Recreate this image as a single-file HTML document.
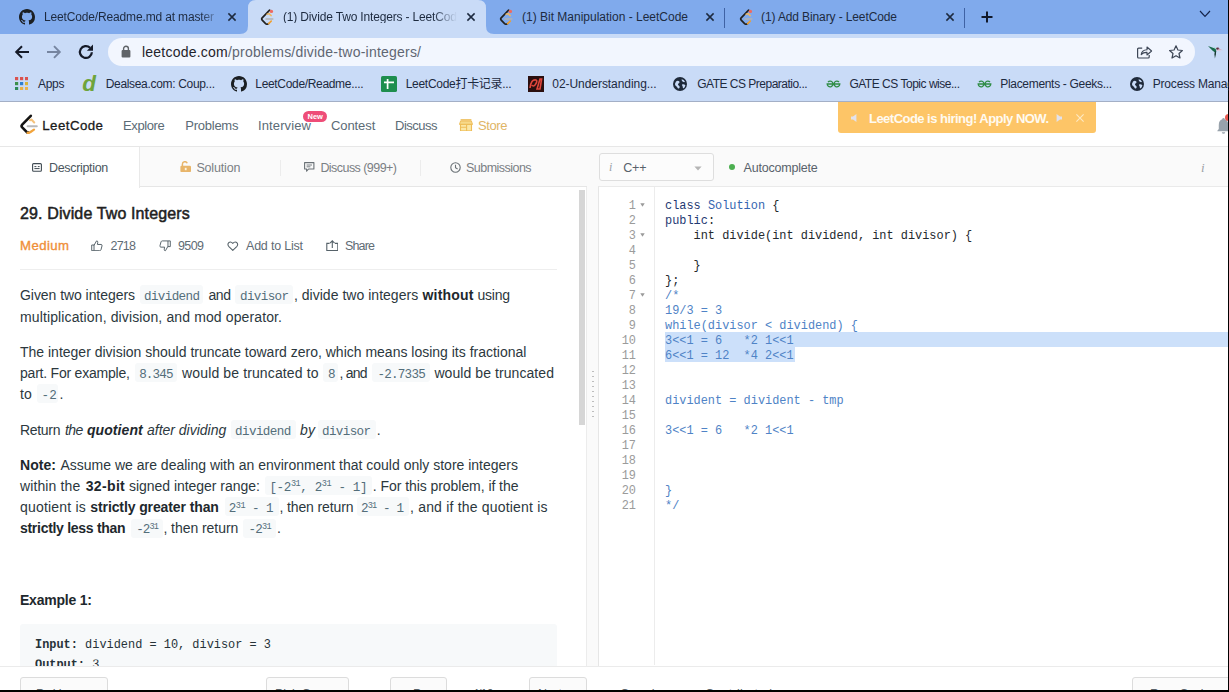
<!DOCTYPE html>
<html><head><meta charset="utf-8"><title>Divide Two Integers - LeetCode</title>
<style>
*{box-sizing:border-box;margin:0;padding:0}
html,body{width:1229px;height:692px;overflow:hidden;background:#fff}
body{font-family:"Liberation Sans","Noto Sans CJK SC",sans-serif;position:relative}
.a{position:absolute}
.t{position:absolute;white-space:pre;line-height:1}
sup{font-size:.68em;vertical-align:baseline;position:relative;top:-.5em;line-height:0}
</style></head><body>

<div class="a" style="left:0;top:0;width:1229px;height:33.5px;background:#80aaec"></div>
<div class="a" style="left:0;top:33.5px;width:1229px;height:69px;background:#c9dbf7"></div>
<div class="a" style="left:0;top:101.4px;width:1229px;height:1.2px;background:#a3afc6"></div>
<svg class="a" style="left:240px;top:0" width="256" height="34" viewBox="0 0 256 34"><path fill="#c9dbf7" d="M0 34 Q8 34 8 26 V8 Q8 0 16 0 H238 Q246 0 246 8 V26 Q246 34 254 34 Z"/></svg>
<div class="a" style="left:108px;top:38px;width:1087px;height:28px;border-radius:14px;background:#f2f6fe"></div>
<div class="a" style="left:724.3px;top:7.5px;width:1px;height:20px;background:#3f62a4"></div>
<div class="a" style="left:964.2px;top:7.5px;width:1px;height:20px;background:#3f62a4"></div>
<svg class="a" style="left:19px;top:9px;" width="16" height="16" viewBox="0 0 16 16"><path fill="#1b1f23" d="M8 0C3.58 0 0 3.58 0 8c0 3.54 2.29 6.53 5.47 7.59.4.07.55-.17.55-.38 0-.19-.01-.82-.01-1.49-2.01.37-2.53-.49-2.69-.94-.09-.23-.48-.94-.82-1.13-.28-.15-.68-.52-.01-.53.63-.01 1.08.58 1.23.82.72 1.21 1.87.87 2.33.66.07-.52.28-.87.51-1.07-1.78-.2-3.64-.89-3.64-3.95 0-.87.31-1.59.82-2.15-.08-.2-.36-1.02.08-2.12 0 0 .67-.21 2.2.82.64-.18 1.32-.27 2-.27.68 0 1.36.09 2 .27 1.53-1.04 2.2-.82 2.2-.82.44 1.1.16 1.92.08 2.12.51.56.82 1.27.82 2.15 0 3.07-1.87 3.75-3.65 3.95.29.25.54.73.54 1.48 0 1.07-.01 1.93-.01 2.2 0 .21.15.46.55.38A8.013 8.013 0 0016 8c0-4.42-3.58-8-8-8z"/></svg>
<svg class="a" style="left:226.5px;top:12px;" width="10" height="10" viewBox="0 0 10 10"><path d="M1.4 1.4 L8.6 8.6 M8.6 1.4 L1.4 8.6" stroke="#1d2a3f" stroke-width="1.5" fill="none"/></svg>
<svg class="a" style="left:260px;top:9px;" width="14" height="16" viewBox="0 0 14 16"><path d="M9.6 1.2 L2.2 8.8 Q1.2 10 2.2 11.2 L5.6 14.6 Q7 15.8 8.6 14.6" fill="none" stroke="#222" stroke-width="1.7" stroke-linecap="round" stroke-linejoin="round"/><path d="M8.6 14.6 L11.2 12.2" fill="none" stroke="#f0a030" stroke-width="1.7" stroke-linecap="round"/><path d="M7.2 5.2 L9 4.6 L11.2 6.6" fill="none" stroke="#f0b860" stroke-width="1.5" stroke-linecap="round" stroke-linejoin="round"/><path d="M6 9.9 H12.8" stroke="#b3b3b3" stroke-width="1.5" stroke-linecap="round"/><circle cx="11.4" cy="2.4" r="1.7" fill="#ee6a62"/></svg>
<svg class="a" style="left:466px;top:12px;" width="10" height="10" viewBox="0 0 10 10"><path d="M1.4 1.4 L8.6 8.6 M8.6 1.4 L1.4 8.6" stroke="#1d2a3f" stroke-width="1.5" fill="none"/></svg>
<svg class="a" style="left:499px;top:9px;" width="14" height="16" viewBox="0 0 14 16"><path d="M9.6 1.2 L2.2 8.8 Q1.2 10 2.2 11.2 L5.6 14.6 Q7 15.8 8.6 14.6" fill="none" stroke="#222" stroke-width="1.7" stroke-linecap="round" stroke-linejoin="round"/><path d="M8.6 14.6 L11.2 12.2" fill="none" stroke="#f0a030" stroke-width="1.7" stroke-linecap="round"/><path d="M7.2 5.2 L9 4.6 L11.2 6.6" fill="none" stroke="#f0b860" stroke-width="1.5" stroke-linecap="round" stroke-linejoin="round"/><path d="M6 9.9 H12.8" stroke="#b3b3b3" stroke-width="1.5" stroke-linecap="round"/><circle cx="11.4" cy="2.4" r="1.7" fill="#ee6a62"/></svg>
<svg class="a" style="left:705px;top:12px;" width="10" height="10" viewBox="0 0 10 10"><path d="M1.4 1.4 L8.6 8.6 M8.6 1.4 L1.4 8.6" stroke="#1d2a3f" stroke-width="1.5" fill="none"/></svg>
<svg class="a" style="left:739px;top:9px;" width="14" height="16" viewBox="0 0 14 16"><path d="M9.6 1.2 L2.2 8.8 Q1.2 10 2.2 11.2 L5.6 14.6 Q7 15.8 8.6 14.6" fill="none" stroke="#222" stroke-width="1.7" stroke-linecap="round" stroke-linejoin="round"/><path d="M8.6 14.6 L11.2 12.2" fill="none" stroke="#f0a030" stroke-width="1.7" stroke-linecap="round"/><path d="M7.2 5.2 L9 4.6 L11.2 6.6" fill="none" stroke="#f0b860" stroke-width="1.5" stroke-linecap="round" stroke-linejoin="round"/><path d="M6 9.9 H12.8" stroke="#b3b3b3" stroke-width="1.5" stroke-linecap="round"/><circle cx="11.4" cy="2.4" r="1.7" fill="#ee6a62"/></svg>
<svg class="a" style="left:944.5px;top:12px;" width="10" height="10" viewBox="0 0 10 10"><path d="M1.4 1.4 L8.6 8.6 M8.6 1.4 L1.4 8.6" stroke="#1d2a3f" stroke-width="1.5" fill="none"/></svg>
<svg class="a" style="left:980px;top:10px;" width="14" height="14" viewBox="0 0 14 14"><path d="M7 1.5 V12.5 M1.5 7 H12.5" stroke="#10182a" stroke-width="2" fill="none"/></svg>
<svg class="a" style="left:1198px;top:9px;" width="14" height="10" viewBox="0 0 14 10"><path d="M2 2 L7 7.4 L12 2" stroke="#15244a" stroke-width="1.15" fill="none"/></svg>
<svg class="a" style="left:14px;top:44px;" width="17" height="16" viewBox="0 0 17 16"><path d="M15 8 H2.5 M8 2.2 L2.2 8 L8 13.8" stroke="#151a28" stroke-width="2" fill="none"/></svg>
<svg class="a" style="left:45.3px;top:44px;" width="17" height="16" viewBox="0 0 17 16"><path d="M2 8 H14.5 M9 2.2 L14.8 8 L9 13.8" stroke="#7685a0" stroke-width="1.9" fill="none"/></svg>
<svg class="a" style="left:77.4px;top:43px;" width="18" height="18" viewBox="0 0 16 16"><path d="M13.2 8.2 A5.3 5.3 0 1 1 11.6 4.2" stroke="#151a28" stroke-width="2" fill="none"/><path d="M14.2 1.4 V6.8 H8.8 Z" fill="#151a28"/></svg>
<svg class="a" style="left:121px;top:45px;" width="10" height="13" viewBox="0 0 10 13"><rect x="0.6" y="5" width="8.8" height="7.4" rx="1" fill="#5f6368"/><path d="M2.6 5.2 V3.6 A2.4 2.4 0 0 1 7.4 3.6 V5.2" stroke="#5f6368" stroke-width="1.4" fill="none"/></svg>
<svg class="a" style="left:1136px;top:44px;" width="17" height="16" viewBox="0 0 17 16"><path d="M6.2 4.2 H2.6 Q1.6 4.2 1.6 5.2 V13 Q1.6 14 2.6 14 H12.2 Q13.2 14 13.2 13 V11" stroke="#3d4656" stroke-width="1.2" fill="none"/><path d="M5.2 10.6 Q5.8 6 11 5.8 V3 L15.6 7 L11 11 V8.4 Q7.4 8.2 5.2 10.6 Z" stroke="#3d4656" stroke-width="1.1" fill="none" stroke-linejoin="round"/></svg>
<svg class="a" style="left:1168px;top:43.5px;" width="16" height="16" viewBox="0 0 16 16"><path d="M8 1.8 L9.9 6 L14.4 6.5 L11 9.5 L12 14 L8 11.7 L4 14 L5 9.5 L1.6 6.5 L6.1 6 Z" stroke="#3d4656" stroke-width="1.2" fill="none" stroke-linejoin="round"/></svg>
<svg class="a" style="left:1207px;top:44px;" width="17" height="15" viewBox="0 0 17 15"><path d="M1 2 L8 4.6 Q9.6 5.4 9.2 7.4 L8 8.4 L5.4 6.6 Z" fill="#1a6b4c"/><path d="M6.6 2.6 L9 4.2 L8.6 5.4 Z" fill="#9be0c6"/><path d="M9.2 7 L8.9 10.4 L7.9 14.4 L7.4 10 L7.9 7.6 Z" fill="#173a30"/><ellipse cx="10.7" cy="4.7" rx="1.6" ry="1.1" fill="#5c2b3a"/><path d="M11.4 4.4 L15.8 6.2 L11.2 5.8 Z" fill="#dca3b4"/><path d="M9.6 6.4 Q12 6.2 13.6 7" stroke="#e8c3cf" stroke-width="0.8" fill="none"/></svg>
<svg class="a" style="left:15px;top:77px;" width="13.2" height="13.2" viewBox="0 0 13.2 13.2"><rect x="0" y="0" width="3.2" height="3.2" fill="#d9534f"/><rect x="5" y="0" width="3.2" height="3.2" fill="#d9534f"/><rect x="10" y="0" width="3.2" height="3.2" fill="#d9534f"/><rect x="0" y="5" width="3.2" height="3.2" fill="#3c8f4a"/><rect x="5" y="5" width="3.2" height="3.2" fill="#2f7fd0"/><rect x="10" y="5" width="3.2" height="3.2" fill="#d8b23a"/><rect x="0" y="10" width="3.2" height="3.2" fill="#2f8a5a"/><rect x="5" y="10" width="3.2" height="3.2" fill="#e7b04a"/><rect x="10" y="10" width="3.2" height="3.2" fill="#e9b24c"/></svg>
<svg class="a" style="left:231px;top:76px;" width="16" height="16" viewBox="0 0 16 16"><path fill="#1b1f23" d="M8 0C3.58 0 0 3.58 0 8c0 3.54 2.29 6.53 5.47 7.59.4.07.55-.17.55-.38 0-.19-.01-.82-.01-1.49-2.01.37-2.53-.49-2.69-.94-.09-.23-.48-.94-.82-1.13-.28-.15-.68-.52-.01-.53.63-.01 1.08.58 1.23.82.72 1.21 1.87.87 2.33.66.07-.52.28-.87.51-1.07-1.78-.2-3.64-.89-3.64-3.95 0-.87.31-1.59.82-2.15-.08-.2-.36-1.02.08-2.12 0 0 .67-.21 2.2.82.64-.18 1.32-.27 2-.27.68 0 1.36.09 2 .27 1.53-1.04 2.2-.82 2.2-.82.44 1.1.16 1.92.08 2.12.51.56.82 1.27.82 2.15 0 3.07-1.87 3.75-3.65 3.95.29.25.54.73.54 1.48 0 1.07-.01 1.93-.01 2.2 0 .21.15.46.55.38A8.013 8.013 0 0016 8c0-4.42-3.58-8-8-8z"/></svg>
<svg class="a" style="left:380.7px;top:76px;" width="16" height="16" viewBox="0 0 16 16"><rect width="16" height="16" rx="1.6" fill="#1e8e4e"/><path d="M3 6.4 H13 M6.6 3 V13" stroke="#fff" stroke-width="1.7"/></svg>
<svg class="a" style="left:528px;top:76px;" width="16" height="16" viewBox="0 0 16 16"><rect width="16" height="16" fill="#2a0f0f"/><path d="M2 12 Q3 3 8 4 Q10 5 7 9 Q5 11 4 9 M9 13 L12 3 L13.6 3 L12 13 Z" stroke="#e0463c" stroke-width="1.6" fill="none"/></svg>
<svg class="a" style="left:673.3px;top:77px;" width="14" height="14" viewBox="0 0 14 14"><circle cx="7" cy="7" r="7" fill="#1f2a3a"/><path d="M3 4.4 Q5 3 6.4 4.6 Q7 6 5.4 6.6 Q4.4 7.6 5.6 8.6 Q7 9 6.6 10.8 Q6 12 5 11.4 Q4 9.4 2.4 8.4 Q1.6 6.4 3 4.4 Z M8.6 2.2 Q11 2.6 12 4.8 Q11 5.6 10 4.8 Q8.6 4.4 8.6 2.2 Z M9 7.4 Q11 6.8 12.4 8.2 Q12 10.4 10.4 11.4 Q9.4 10.4 9.6 9 Q8.6 8.2 9 7.4 Z" fill="#c9dbf7"/></svg>
<svg class="a" style="left:825.7px;top:80px;" width="15" height="8" viewBox="0 0 15 8"><path d="M7 4 H1.2 A2.9 2.9 0 1 0 2 2 M8 4 H13.8 A2.9 2.9 0 1 1 13 2" stroke="#2f8d46" stroke-width="1.3" fill="none"/></svg>
<svg class="a" style="left:977px;top:80px;" width="15" height="8" viewBox="0 0 15 8"><path d="M7 4 H1.2 A2.9 2.9 0 1 0 2 2 M8 4 H13.8 A2.9 2.9 0 1 1 13 2" stroke="#2f8d46" stroke-width="1.3" fill="none"/></svg>
<svg class="a" style="left:1129.7px;top:77px;" width="14" height="14" viewBox="0 0 14 14"><circle cx="7" cy="7" r="7" fill="#1f2a3a"/><path d="M3 4.4 Q5 3 6.4 4.6 Q7 6 5.4 6.6 Q4.4 7.6 5.6 8.6 Q7 9 6.6 10.8 Q6 12 5 11.4 Q4 9.4 2.4 8.4 Q1.6 6.4 3 4.4 Z M8.6 2.2 Q11 2.6 12 4.8 Q11 5.6 10 4.8 Q8.6 4.4 8.6 2.2 Z M9 7.4 Q11 6.8 12.4 8.2 Q12 10.4 10.4 11.4 Q9.4 10.4 9.6 9 Q8.6 8.2 9 7.4 Z" fill="#c9dbf7"/></svg>
<div class="a" style="left:0;top:102px;width:1229px;height:44px;background:#fff"></div>
<div class="a" style="left:0;top:146px;width:1229px;height:1px;background:#e7e7e7"></div>
<svg class="a" style="left:19px;top:112.7px;" width="20" height="24" viewBox="0 0 20 24"><path d="M11.8 2.8 L3.2 11.6 Q1.9 13 3.2 14.4 L7.6 18.9 Q8.4 19.8 9.4 19.6" fill="none" stroke="#141414" stroke-width="2.6" stroke-linecap="round" stroke-linejoin="round"/><path d="M8.6 19.8 Q10 20.2 11.2 19.2 L15 16.6" fill="none" stroke="#f2a43c" stroke-width="2.3" stroke-linecap="round"/><path d="M11 7.2 L12.4 6.6 L15.2 9.4" fill="none" stroke="#f4c27c" stroke-width="2.1" stroke-linecap="round" stroke-linejoin="round"/><path d="M8.6 13.2 H17.8" stroke="#b9b9b9" stroke-width="2" stroke-linecap="round"/></svg>
<div class="a" style="left:303px;top:110.5px;width:24px;height:11px;border-radius:6px;background:#ee4d78"></div>
<svg class="a" style="left:459px;top:118.5px;" width="14" height="12.6" viewBox="0 0 14 12.6"><path d="M1.6 0.9 H12.4" stroke="#eebd58" stroke-width="1.5"/><path d="M1.6 2 L0.5 5.4 H13.5 L12.4 2 Z" fill="#f7d98a" stroke="#eebd58" stroke-width="1"/><rect x="1.5" y="5.4" width="11" height="6.5" fill="#fbe7a6" stroke="#eebd58" stroke-width="1.1"/><path d="M7.6 5.4 V11.9 M1.5 8.3 H7.6" stroke="#eebd58" stroke-width="1.1"/></svg>
<div class="a" style="left:837.5px;top:102px;width:258.5px;height:30.5px;border-radius:0 0 3px 3px;background:#fdc567"></div>
<svg class="a" style="left:849px;top:113px;" width="10" height="10" viewBox="0 0 10 10"><path d="M2 3.4 H4 L7.4 1 V9 L4 6.6 H2 Z" fill="#e2e2ec"/></svg>
<svg class="a" style="left:1054px;top:113px;" width="10" height="10" viewBox="0 0 10 10"><path d="M8 3.4 H6 L2.6 1 V9 L6 6.6 H8 Z" fill="#e2e2ec"/></svg>
<svg class="a" style="left:1074.5px;top:113px;" width="10" height="10" viewBox="0 0 10 10"><path d="M1.4 1.4 L8.6 8.6 M8.6 1.4 L1.4 8.6" stroke="#fde9c4" stroke-width="1.1" fill="none"/></svg>
<svg class="a" style="left:1216.5px;top:116.5px;" width="13" height="17.5" viewBox="0 0 14 20"><path d="M7 1 Q8.4 1 8.4 2.6 Q12.4 3.8 12.4 9 V13.6 L14 15.6 V16.4 H0 V15.6 L1.6 13.6 V9 Q1.6 3.8 5.6 2.6 Q5.6 1 7 1 Z" fill="#98a2ab"/><path d="M5 17.4 H9 Q8.6 19.2 7 19.2 Q5.4 19.2 5 17.4 Z" fill="#98a2ab"/></svg>
<div class="a" style="left:1224.5px;top:113.5px;width:7px;height:7px;border-radius:4px;background:#e9574f"></div>
<div class="a" style="left:0;top:147px;width:1229px;height:541px;background:#fafafa"></div>
<div class="a" style="left:0;top:187px;width:587px;height:479px;background:#fff;border-right:1px solid #ececec"></div>
<div class="a" style="left:0;top:147px;width:140px;height:41px;background:#fff;border-right:1px solid #e9e9e9"></div>
<div class="a" style="left:140px;top:186px;width:447px;height:1px;background:#e6e6e6"></div>
<div class="a" style="left:280px;top:160px;width:1px;height:16px;background:#ececec"></div>
<div class="a" style="left:420px;top:160px;width:1px;height:16px;background:#ececec"></div>
<svg class="a" style="left:32px;top:163px;" width="10" height="9" viewBox="0 0 10 9"><rect x="0.6" y="0.6" width="8.8" height="7.6" rx="1" fill="none" stroke="#3f4a52" stroke-width="1.1"/><path d="M2.4 3.6 H4.4 M2.4 5.6 H7.6 M5.8 3.6 H7.6" stroke="#3f4a52" stroke-width="1"/></svg>
<svg class="a" style="left:180px;top:160.5px;" width="11.5" height="11.5" viewBox="0 0 11.5 11.5"><path d="M2.4 5 V3.2 A2.5 2.5 0 0 1 7.2 2.2" stroke="#e8b56a" stroke-width="1.5" fill="none"/><rect x="0.4" y="4.8" width="10.6" height="6.4" rx="1.2" fill="#e8b56a"/><rect x="4.8" y="6.8" width="1.8" height="2.4" fill="#fdf3e0"/></svg>
<svg class="a" style="left:304px;top:162px;" width="10.5" height="10" viewBox="0 0 10.5 10"><path d="M0.6 0.6 H9.9 V7 H4.6 L2.6 9.2 V7 H0.6 Z" fill="none" stroke="#6a7176" stroke-width="1.1" stroke-linejoin="round"/><path d="M2.6 3 H8 M2.6 4.8 H6.4" stroke="#6a7176" stroke-width="0.9"/></svg>
<svg class="a" style="left:450px;top:162px;" width="11" height="11" viewBox="0 0 11 11"><circle cx="5.5" cy="5.5" r="4.7" fill="none" stroke="#6a7176" stroke-width="1.1"/><path d="M5.5 2.8 V5.7 L7.6 6.9" stroke="#6a7176" stroke-width="1.1" fill="none"/></svg>
<div class="a" style="left:578.5px;top:190px;width:6.5px;height:235px;background:#d6d6d6"></div>
<div class="a" style="left:592px;top:371px;width:1.5px;height:46px;background:repeating-linear-gradient(180deg,#bdbdbd 0 1.5px,transparent 1.5px 5px)"></div>
<svg class="a" style="left:91.2px;top:239.5px;" width="12" height="11.6" viewBox="0 0 13.5 13"><path d="M0.8 5.6 H3.4 V12 H0.8 Z M3.4 6 L6.2 1 Q7.8 0.8 7.6 2.6 L7.2 5 H11.4 Q12.8 5.2 12.4 6.6 L11.2 11 Q10.8 12 9.8 12 H3.4" fill="none" stroke="#566269" stroke-width="1.1" stroke-linejoin="round"/></svg>
<svg class="a" style="left:158.5px;top:240.3px;" width="12" height="11.6" viewBox="0 0 13.5 13"><path d="M12.7 7.4 H10.1 V1 H12.7 Z M10.1 7 L7.3 12 Q5.7 12.2 5.9 10.4 L6.3 8 H2.1 Q0.7 7.8 1.1 6.4 L2.3 2 Q2.7 1 3.7 1 H10.1" fill="none" stroke="#566269" stroke-width="1.1" stroke-linejoin="round"/></svg>
<svg class="a" style="left:227.3px;top:240.6px;" width="11.6" height="10.4" viewBox="0 0 12 11"><path d="M6 10 L1.6 5.6 Q0 3.4 1.8 1.6 Q4 0.2 6 2.6 Q8 0.2 10.2 1.6 Q12 3.4 10.4 5.6 Z" fill="none" stroke="#566269" stroke-width="1.1" stroke-linejoin="round"/></svg>
<svg class="a" style="left:325.8px;top:239.6px;" width="12.6" height="11.4" viewBox="0 0 12.6 11.4"><path d="M3.6 3.4 H0.8 V10.6 H11.8 V3.4 H9" fill="none" stroke="#566269" stroke-width="1.1"/><path d="M6.3 8 V1.2 M4 3.2 L6.3 0.9 L8.6 3.2" fill="none" stroke="#566269" stroke-width="1.1"/></svg>
<div class="a" style="left:20px;top:269px;width:537px;height:1px;background:#eeeeee"></div>
<div class="a" style="left:139.5px;top:285.0px;width:63.5px;height:19px;background:#f7f9fa;border-radius:3px"></div>
<div class="a" style="left:235px;top:285.0px;width:58.0px;height:19px;background:#f7f9fa;border-radius:3px"></div>
<div class="a" style="left:135px;top:363.2px;width:42.3px;height:19px;background:#f7f9fa;border-radius:3px"></div>
<div class="a" style="left:322.9px;top:363.2px;width:15.6px;height:19px;background:#f7f9fa;border-radius:3px"></div>
<div class="a" style="left:372.3px;top:363.2px;width:57.7px;height:19px;background:#f7f9fa;border-radius:3px"></div>
<div class="a" style="left:37.3px;top:384.2px;width:21.2px;height:19px;background:#f7f9fa;border-radius:3px"></div>
<div class="a" style="left:230.8px;top:420.0px;width:64.8px;height:19px;background:#f7f9fa;border-radius:3px"></div>
<div class="a" style="left:317.6px;top:420.0px;width:58.4px;height:19px;background:#f7f9fa;border-radius:3px"></div>
<div class="a" style="left:264.8px;top:476.0px;width:107.2px;height:19px;background:#f7f9fa;border-radius:3px"></div>
<div class="a" style="left:224.5px;top:497.4px;width:54.0px;height:19px;background:#f7f9fa;border-radius:3px"></div>
<div class="a" style="left:356.5px;top:497.4px;width:52.5px;height:19px;background:#f7f9fa;border-radius:3px"></div>
<div class="a" style="left:130.6px;top:518.6px;width:32.1px;height:19px;background:#f7f9fa;border-radius:3px"></div>
<div class="a" style="left:243.4px;top:518.6px;width:32.3px;height:19px;background:#f7f9fa;border-radius:3px"></div>
<div class="a" style="left:20px;top:624px;width:537px;height:42px;background:#f7f9fa;border-radius:3px 3px 0 0"></div>
<div class="a" style="left:598.5px;top:153px;width:115px;height:27.5px;background:#fcfcfc;border:1px solid #dedede;border-radius:3px"></div>
<svg class="a" style="left:693.5px;top:165.5px;" width="8" height="5" viewBox="0 0 8 5"><path d="M0.4 0.4 H7.6 L4 4.4 Z" fill="#b5b5b5"/></svg>
<div class="a" style="left:729.4px;top:164px;width:5.6px;height:5.6px;border-radius:3px;background:#4caf50"></div>
<div class="a" style="left:598px;top:186px;width:631px;height:480.5px;background:#fff;border-left:1px solid #e6e6e6;border-top:1px solid #eaeaea;border-bottom:1px solid #eaeaea"></div>
<div class="a" style="left:654px;top:187px;width:1px;height:478px;background:#ececec"></div>
<div class="a" style="left:665px;top:331.7px;width:564px;height:15px;background:#cce0fa"></div>
<div class="a" style="left:665px;top:346.7px;width:129.5px;height:15px;background:#cce0fa"></div>
<svg class="a" style="left:640px;top:203px;" width="5" height="4" viewBox="0 0 5 4"><path d="M0.3 0.3 H4.7 L2.5 3.7 Z" fill="#9a9a9a"/></svg>
<svg class="a" style="left:640px;top:233px;" width="5" height="4" viewBox="0 0 5 4"><path d="M0.3 0.3 H4.7 L2.5 3.7 Z" fill="#9a9a9a"/></svg>
<svg class="a" style="left:640px;top:293px;" width="5" height="4" viewBox="0 0 5 4"><path d="M0.3 0.3 H4.7 L2.5 3.7 Z" fill="#9a9a9a"/></svg>
<div class="a" style="left:0;top:666px;width:1229px;height:24px;background:#fff;border-top:1px solid #ebebeb"></div>
<div class="a" style="left:20px;top:677.2px;width:87.5px;height:14px;border:1px solid #dcdcdc;border-radius:3px 3px 0 0;background:#fbfbfb"></div>
<div class="a" style="left:266px;top:677.2px;width:83px;height:14px;border:1px solid #dcdcdc;border-radius:3px 3px 0 0;background:#fbfbfb"></div>
<div class="a" style="left:390px;top:677.2px;width:56.5px;height:14px;border:1px solid #dcdcdc;border-radius:3px 3px 0 0;background:#fbfbfb"></div>
<div class="a" style="left:528.5px;top:677.2px;width:58.0px;height:14px;border:1px solid #dcdcdc;border-radius:3px 3px 0 0;background:#fbfbfb"></div>
<div class="a" style="left:1131.5px;top:677.2px;width:108.5px;height:14px;border:1px solid #dcdcdc;border-radius:3px 3px 0 0;background:#fbfbfb"></div>
<div class="a" style="left:0;top:689.8px;width:1229px;height:2.2px;background:#000"></div>
<div class="a" style="left:1227.9px;top:0;width:1.1px;height:692px;background:#000"></div>
<div class="t" id="t0" style='left:44px;top:11.00px;font:400 12px/1 "Liberation Sans","Noto Sans CJK SC",sans-serif;color:#1d2a3f;letter-spacing:-0.152px;-webkit-mask-image:linear-gradient(90deg,#000 92%,rgba(0,0,0,.35) 100%);mask-image:linear-gradient(90deg,#000 92%,rgba(0,0,0,.35) 100%);'>LeetCode/Readme.md at master</div>
<div class="t" id="t1" style='left:283px;top:11.00px;font:400 12px/1 "Liberation Sans","Noto Sans CJK SC",sans-serif;color:#1d2a3f;letter-spacing:-0.163px;-webkit-mask-image:linear-gradient(90deg,#000 86%,transparent 100%);mask-image:linear-gradient(90deg,#000 86%,transparent 100%);'>(1) Divide Two Integers - LeetCod</div>
<div class="t" id="t2" style='left:522px;top:11.00px;font:400 12px/1 "Liberation Sans","Noto Sans CJK SC",sans-serif;color:#1d2a3f;letter-spacing:-0.003px;'>(1) Bit Manipulation - LeetCode</div>
<div class="t" id="t3" style='left:761px;top:11.00px;font:400 12px/1 "Liberation Sans","Noto Sans CJK SC",sans-serif;color:#1d2a3f;letter-spacing:-0.115px;'>(1) Add Binary - LeetCode</div>
<div class="t" id="t4" style='left:142px;top:45.00px;font:400 14px/1 "Liberation Sans","Noto Sans CJK SC",sans-serif;color:#263238;letter-spacing:0.219px;'><span style="color:#1f232b">leetcode.com</span><span style="color:#5f6673">/problems/divide-two-integers/</span></div>
<div class="t" id="t5" style='left:38px;top:78.00px;font:400 12px/1 "Liberation Sans","Noto Sans CJK SC",sans-serif;color:#1d2a3f;letter-spacing:-0.286px;'>Apps</div>
<div class="t" id="t6" style='left:82.3px;top:73.00px;font:italic 700 22.5px/1 "Liberation Sans","Noto Sans CJK SC",sans-serif;color:#6ea43c;letter-spacing:0.000px;'>d</div>
<div class="t" id="t7" style='left:105.7px;top:78.00px;font:400 12px/1 "Liberation Sans","Noto Sans CJK SC",sans-serif;color:#1d2a3f;letter-spacing:-0.321px;'>Dealsea.com: Coup...</div>
<div class="t" id="t8" style='left:255.3px;top:78.00px;font:400 12px/1 "Liberation Sans","Noto Sans CJK SC",sans-serif;color:#1d2a3f;letter-spacing:-0.327px;'>LeetCode/Readme....</div>
<div class="t" id="t9" style='left:405.7px;top:78.00px;font:400 12px/1 "Liberation Sans","Noto Sans CJK SC",sans-serif;color:#1d2a3f;letter-spacing:-0.289px;'>LeetCode打卡记录...</div>
<div class="t" id="t10" style='left:552.3px;top:78.00px;font:400 12px/1 "Liberation Sans","Noto Sans CJK SC",sans-serif;color:#1d2a3f;letter-spacing:-0.056px;'>02-Understanding...</div>
<div class="t" id="t11" style='left:697.3px;top:78.00px;font:400 12px/1 "Liberation Sans","Noto Sans CJK SC",sans-serif;color:#1d2a3f;letter-spacing:-0.510px;'>GATE CS Preparatio...</div>
<div class="t" id="t12" style='left:849.4px;top:78.00px;font:400 12px/1 "Liberation Sans","Noto Sans CJK SC",sans-serif;color:#1d2a3f;letter-spacing:-0.483px;'>GATE CS Topic wise...</div>
<div class="t" id="t13" style='left:1000.3px;top:78.00px;font:400 12px/1 "Liberation Sans","Noto Sans CJK SC",sans-serif;color:#1d2a3f;letter-spacing:-0.317px;'>Placements - Geeks...</div>
<div class="t" id="t14" style='left:1152.7px;top:78.00px;font:400 12px/1 "Liberation Sans","Noto Sans CJK SC",sans-serif;color:#1d2a3f;letter-spacing:-0.173px;'>Process Manag</div>
<div class="t" id="t15" style='left:42.3px;top:119.20px;font:400 13.3px/1 "Liberation Sans","Noto Sans CJK SC",sans-serif;color:#1a1a1a;letter-spacing:0.433px;-webkit-text-stroke:0.3px #1a1a1a;'>LeetCode</div>
<div class="t" id="t16" style='left:123px;top:118.60px;font:400 13px/1 "Liberation Sans","Noto Sans CJK SC",sans-serif;color:#5b6b76;letter-spacing:-0.380px;'>Explore</div>
<div class="t" id="t17" style='left:185.2px;top:118.60px;font:400 13px/1 "Liberation Sans","Noto Sans CJK SC",sans-serif;color:#5b6b76;letter-spacing:-0.232px;'>Problems</div>
<div class="t" id="t18" style='left:258px;top:118.60px;font:400 13px/1 "Liberation Sans","Noto Sans CJK SC",sans-serif;color:#5b6b76;letter-spacing:0.121px;'>Interview</div>
<div class="t" id="t19" style='left:307.5px;top:113.20px;font:700 7.5px/1 "Liberation Sans","Noto Sans CJK SC",sans-serif;color:#fff;letter-spacing:0.000px;'>New</div>
<div class="t" id="t20" style='left:331px;top:118.60px;font:400 13px/1 "Liberation Sans","Noto Sans CJK SC",sans-serif;color:#5b6b76;letter-spacing:-0.085px;'>Contest</div>
<div class="t" id="t21" style='left:395px;top:118.60px;font:400 13px/1 "Liberation Sans","Noto Sans CJK SC",sans-serif;color:#5b6b76;letter-spacing:-0.503px;'>Discuss</div>
<div class="t" id="t22" style='left:478px;top:118.60px;font:400 13px/1 "Liberation Sans","Noto Sans CJK SC",sans-serif;color:#e0b566;letter-spacing:-0.395px;'>Store</div>
<div class="t" id="t23" style='left:869px;top:111.60px;font:700 13px/1 "Liberation Sans","Noto Sans CJK SC",sans-serif;color:#fffaf0;letter-spacing:-0.526px;'>LeetCode is hiring! Apply NOW.</div>
<div class="t" id="t24" style='left:49px;top:161.90px;font:400 12.5px/1 "Liberation Sans","Noto Sans CJK SC",sans-serif;color:#4b565e;letter-spacing:-0.323px;'>Description</div>
<div class="t" id="t25" style='left:196.4px;top:161.90px;font:400 12.5px/1 "Liberation Sans","Noto Sans CJK SC",sans-serif;color:#7a8084;letter-spacing:-0.170px;'>Solution</div>
<div class="t" id="t26" style='left:320.4px;top:161.90px;font:400 12.5px/1 "Liberation Sans","Noto Sans CJK SC",sans-serif;color:#7a8084;letter-spacing:-0.548px;'>Discuss (999+)</div>
<div class="t" id="t27" style='left:466px;top:161.90px;font:400 12.5px/1 "Liberation Sans","Noto Sans CJK SC",sans-serif;color:#7a8084;letter-spacing:-0.527px;'>Submissions</div>
<div class="t" id="t28" style='left:20px;top:205.50px;font:400 16px/1 "Liberation Sans","Noto Sans CJK SC",sans-serif;color:#212121;letter-spacing:0.127px;-webkit-text-stroke:0.5px #212121;'>29. Divide Two Integers</div>
<div class="t" id="t29" style='left:20px;top:238.80px;font:400 13.2px/1 "Liberation Sans","Noto Sans CJK SC",sans-serif;color:#ef8f3a;letter-spacing:0.419px;-webkit-text-stroke:0.35px #ef8f3a;'>Medium</div>
<div class="t" id="t30" style='left:110.5px;top:239.80px;font:400 12.5px/1 "Liberation Sans","Noto Sans CJK SC",sans-serif;color:#5f6c75;letter-spacing:-0.771px;'>2718</div>
<div class="t" id="t31" style='left:178px;top:239.80px;font:400 12.5px/1 "Liberation Sans","Noto Sans CJK SC",sans-serif;color:#5f6c75;letter-spacing:-0.604px;'>9509</div>
<div class="t" id="t32" style='left:246px;top:239.80px;font:400 12.5px/1 "Liberation Sans","Noto Sans CJK SC",sans-serif;color:#5f6c75;letter-spacing:-0.208px;'>Add to List</div>
<div class="t" id="t33" style='left:345px;top:239.80px;font:400 12.5px/1 "Liberation Sans","Noto Sans CJK SC",sans-serif;color:#5f6c75;letter-spacing:-0.840px;'>Share</div>
<div class="t" id="t34" style='left:20px;top:287.70px;font:400 14px/1 "Liberation Sans","Noto Sans CJK SC",sans-serif;color:#2c383e;letter-spacing:-0.056px;'>Given two integers</div>
<div class="t" id="t35" style='left:144px;top:290.70px;font:400 12.6px/1 "Liberation Mono","DejaVu Sans Mono",monospace;color:#546e7a;letter-spacing:-0.638px;'>dividend</div>
<div class="t" id="t36" style='left:208.5px;top:287.70px;font:400 14px/1 "Liberation Sans","Noto Sans CJK SC",sans-serif;color:#2c383e;letter-spacing:-0.430px;'>and</div>
<div class="t" id="t37" style='left:240px;top:290.70px;font:400 12.6px/1 "Liberation Mono","DejaVu Sans Mono",monospace;color:#546e7a;letter-spacing:-0.651px;'>divisor</div>
<div class="t" id="t38" style='left:293.9px;top:287.70px;font:400 14px/1 "Liberation Sans","Noto Sans CJK SC",sans-serif;color:#2c383e;letter-spacing:0.028px;'>, divide two integers</div>
<div class="t" id="t39" style='left:422.5px;top:287.70px;font:700 14px/1 "Liberation Sans","Noto Sans CJK SC",sans-serif;color:#1e282d;letter-spacing:0.189px;'>without</div>
<div class="t" id="t40" style='left:477.5px;top:287.70px;font:400 14px/1 "Liberation Sans","Noto Sans CJK SC",sans-serif;color:#2c383e;letter-spacing:-0.242px;'>using</div>
<div class="t" id="t41" style='left:20px;top:309.60px;font:400 14px/1 "Liberation Sans","Noto Sans CJK SC",sans-serif;color:#2c383e;letter-spacing:0.124px;'>multiplication, division, and mod operator.</div>
<div class="t" id="t42" style='left:20px;top:344.50px;font:400 14px/1 "Liberation Sans","Noto Sans CJK SC",sans-serif;color:#2c383e;letter-spacing:-0.002px;'>The integer division should truncate toward zero, which means losing its fractional</div>
<div class="t" id="t43" style='left:20px;top:365.90px;font:400 14px/1 "Liberation Sans","Noto Sans CJK SC",sans-serif;color:#2c383e;letter-spacing:-0.218px;'>part. For example,</div>
<div class="t" id="t44" style='left:139.2px;top:368.90px;font:400 12.6px/1 "Liberation Mono","DejaVu Sans Mono",monospace;color:#546e7a;letter-spacing:-0.874px;'>8.345</div>
<div class="t" id="t45" style='left:182.1px;top:365.90px;font:400 14px/1 "Liberation Sans","Noto Sans CJK SC",sans-serif;color:#2c383e;letter-spacing:0.126px;'>would be truncated to</div>
<div class="t" id="t46" style='left:328px;top:368.90px;font:400 12.6px/1 "Liberation Mono","DejaVu Sans Mono",monospace;color:#546e7a;letter-spacing:0.000px;'>8</div>
<div class="t" id="t47" style='left:339.5px;top:365.90px;font:400 14px/1 "Liberation Sans","Noto Sans CJK SC",sans-serif;color:#2c383e;letter-spacing:-0.785px;'>, and</div>
<div class="t" id="t48" style='left:377.4px;top:368.90px;font:400 12.6px/1 "Liberation Mono","DejaVu Sans Mono",monospace;color:#546e7a;letter-spacing:-0.751px;'>-2.7335</div>
<div class="t" id="t49" style='left:434.4px;top:365.90px;font:400 14px/1 "Liberation Sans","Noto Sans CJK SC",sans-serif;color:#2c383e;letter-spacing:0.076px;'>would be truncated</div>
<div class="t" id="t50" style='left:20px;top:386.90px;font:400 14px/1 "Liberation Sans","Noto Sans CJK SC",sans-serif;color:#2c383e;letter-spacing:0.000px;'>to</div>
<div class="t" id="t51" style='left:41.6px;top:389.90px;font:400 12.6px/1 "Liberation Mono","DejaVu Sans Mono",monospace;color:#546e7a;letter-spacing:0.000px;'>-2</div>
<div class="t" id="t52" style='left:59.5px;top:386.90px;font:400 14px/1 "Liberation Sans","Noto Sans CJK SC",sans-serif;color:#2c383e;letter-spacing:0.000px;'>.</div>
<div class="t" id="t53" style='left:20px;top:422.70px;font:400 14px/1 "Liberation Sans","Noto Sans CJK SC",sans-serif;color:#2c383e;letter-spacing:-0.306px;'>Return</div>
<div class="t" id="t54" style='left:65px;top:422.70px;font:italic 400 14px/1 "Liberation Sans","Noto Sans CJK SC",sans-serif;color:#2c383e;letter-spacing:-0.634px;'>the</div>
<div class="t" id="t55" style='left:87px;top:422.70px;font:italic 700 14px/1 "Liberation Sans","Noto Sans CJK SC",sans-serif;color:#1e282d;letter-spacing:0.069px;'>quotient</div>
<div class="t" id="t56" style='left:147px;top:422.70px;font:italic 400 14px/1 "Liberation Sans","Noto Sans CJK SC",sans-serif;color:#2c383e;letter-spacing:-0.015px;'>after dividing</div>
<div class="t" id="t57" style='left:235px;top:425.70px;font:400 12.6px/1 "Liberation Mono","DejaVu Sans Mono",monospace;color:#546e7a;letter-spacing:-0.596px;'>dividend</div>
<div class="t" id="t58" style='left:300.1px;top:422.70px;font:italic 400 14px/1 "Liberation Sans","Noto Sans CJK SC",sans-serif;color:#2c383e;letter-spacing:0.000px;'>by</div>
<div class="t" id="t59" style='left:322px;top:425.70px;font:400 12.6px/1 "Liberation Mono","DejaVu Sans Mono",monospace;color:#546e7a;letter-spacing:-0.651px;'>divisor</div>
<div class="t" id="t60" style='left:376.8px;top:422.70px;font:400 14px/1 "Liberation Sans","Noto Sans CJK SC",sans-serif;color:#2c383e;letter-spacing:0.000px;'>.</div>
<div class="t" id="t61" style='left:20px;top:457.70px;font:700 14px/1 "Liberation Sans","Noto Sans CJK SC",sans-serif;color:#1e282d;letter-spacing:0.055px;'>Note:</div>
<div class="t" id="t62" style='left:60.5px;top:457.70px;font:400 14px/1 "Liberation Sans","Noto Sans CJK SC",sans-serif;color:#2c383e;letter-spacing:-0.001px;'>Assume we are dealing with an environment that could only store integers</div>
<div class="t" id="t63" style='left:20px;top:478.70px;font:400 14px/1 "Liberation Sans","Noto Sans CJK SC",sans-serif;color:#2c383e;letter-spacing:0.116px;'>within the</div>
<div class="t" id="t64" style='left:85.7px;top:478.70px;font:700 14px/1 "Liberation Sans","Noto Sans CJK SC",sans-serif;color:#1e282d;letter-spacing:0.351px;'>32-bit</div>
<div class="t" id="t65" style='left:129.1px;top:478.70px;font:400 14px/1 "Liberation Sans","Noto Sans CJK SC",sans-serif;color:#2c383e;letter-spacing:-0.042px;'>signed integer range:</div>
<div class="t" id="t66" style='left:269.4px;top:481.70px;font:400 12.6px/1 "Liberation Mono","DejaVu Sans Mono",monospace;color:#546e7a;letter-spacing:-0.400px;'>[-2<sup>31</sup>, 2<sup>31</sup> - 1]</div>
<div class="t" id="t67" style='left:372.8px;top:478.70px;font:400 14px/1 "Liberation Sans","Noto Sans CJK SC",sans-serif;color:#2c383e;letter-spacing:-0.055px;'>. For this problem, if the</div>
<div class="t" id="t68" style='left:20px;top:500.10px;font:400 14px/1 "Liberation Sans","Noto Sans CJK SC",sans-serif;color:#2c383e;letter-spacing:0.197px;'>quotient is</div>
<div class="t" id="t69" style='left:90.3px;top:500.10px;font:700 14px/1 "Liberation Sans","Noto Sans CJK SC",sans-serif;color:#1e282d;letter-spacing:-0.106px;'>strictly greater than</div>
<div class="t" id="t70" style='left:228.8px;top:503.10px;font:400 12.6px/1 "Liberation Mono","DejaVu Sans Mono",monospace;color:#546e7a;letter-spacing:-0.544px;'>2<sup>31</sup> - 1</div>
<div class="t" id="t71" style='left:279.4px;top:500.10px;font:400 14px/1 "Liberation Sans","Noto Sans CJK SC",sans-serif;color:#2c383e;letter-spacing:-0.117px;'>, then return</div>
<div class="t" id="t72" style='left:361px;top:503.10px;font:400 12.6px/1 "Liberation Mono","DejaVu Sans Mono",monospace;color:#546e7a;letter-spacing:-0.844px;'>2<sup>31</sup> - 1</div>
<div class="t" id="t73" style='left:410px;top:500.10px;font:400 14px/1 "Liberation Sans","Noto Sans CJK SC",sans-serif;color:#2c383e;letter-spacing:0.192px;'>, and if the quotient is</div>
<div class="t" id="t74" style='left:20px;top:521.30px;font:700 14px/1 "Liberation Sans","Noto Sans CJK SC",sans-serif;color:#1e282d;letter-spacing:-0.288px;'>strictly less than</div>
<div class="t" id="t75" style='left:136.2px;top:524.30px;font:400 12.6px/1 "Liberation Mono","DejaVu Sans Mono",monospace;color:#546e7a;letter-spacing:-0.900px;'>-2<sup>31</sup></div>
<div class="t" id="t76" style='left:163.4px;top:521.30px;font:400 14px/1 "Liberation Sans","Noto Sans CJK SC",sans-serif;color:#2c383e;letter-spacing:-0.050px;'>, then return</div>
<div class="t" id="t77" style='left:248.4px;top:524.30px;font:400 12.6px/1 "Liberation Mono","DejaVu Sans Mono",monospace;color:#546e7a;letter-spacing:-0.730px;'>-2<sup>31</sup></div>
<div class="t" id="t78" style='left:277px;top:521.30px;font:400 14px/1 "Liberation Sans","Noto Sans CJK SC",sans-serif;color:#2c383e;letter-spacing:0.000px;'>.</div>
<div class="t" id="t79" style='left:20px;top:592.50px;font:700 14px/1 "Liberation Sans","Noto Sans CJK SC",sans-serif;color:#1e282d;letter-spacing:-0.215px;'>Example 1:</div>
<div class="t" id="t80" style='left:35px;top:640.30px;font:400 11.9px/1 "Liberation Mono","DejaVu Sans Mono",monospace;color:#263238;letter-spacing:0.016px;'><b>Input:</b> dividend = 10, divisor = 3</div>
<div class="t" id="t81" style='left:35px;top:659.50px;font:400 11.9px/1 "Liberation Mono","DejaVu Sans Mono",monospace;color:#263238;letter-spacing:0.008px;clip-path:inset(0 0 5.5px 0);'><b>Output:</b> 3</div>
<div class="t" id="t82" style='left:609px;top:161.00px;font:italic 400 12px/1 "Liberation Sans","Noto Sans CJK SC",sans-serif;color:#9aa0a6;letter-spacing:0.000px;font-family:"Liberation Serif",serif;'>i</div>
<div class="t" id="t83" style='left:623.2px;top:161.90px;font:400 12.5px/1 "Liberation Sans","Noto Sans CJK SC",sans-serif;color:#58626b;letter-spacing:-0.170px;'>C++</div>
<div class="t" id="t84" style='left:743.6px;top:161.90px;font:400 12.5px/1 "Liberation Sans","Noto Sans CJK SC",sans-serif;color:#58626b;letter-spacing:-0.203px;'>Autocomplete</div>
<div class="t" id="t85" style='left:1201px;top:160.50px;font:italic 400 13px/1 "Liberation Sans","Noto Sans CJK SC",sans-serif;color:#9aa0a6;letter-spacing:0.000px;font-family:"Liberation Serif",serif;'>i</div>
<div class="t" id="t86" style='left:628.85px;top:201.00px;font:400 11.9px/1 "Liberation Mono","DejaVu Sans Mono",monospace;color:#9b9b9b;letter-spacing:0.000px;'>1</div>
<div class="t" id="t87" style='left:665px;top:201.00px;font:400 11.92px/1 "Liberation Mono","DejaVu Sans Mono",monospace;color:#24292e;letter-spacing:0.000px;'><span style="color:#1f3a73">class</span> <span style="color:#3566b0">Solution</span> {</div>
<div class="t" id="t88" style='left:628.85px;top:216.00px;font:400 11.9px/1 "Liberation Mono","DejaVu Sans Mono",monospace;color:#9b9b9b;letter-spacing:0.000px;'>2</div>
<div class="t" id="t89" style='left:665px;top:216.00px;font:400 11.92px/1 "Liberation Mono","DejaVu Sans Mono",monospace;color:#24292e;letter-spacing:0.000px;'><span style="color:#1f3a73">public</span>:</div>
<div class="t" id="t90" style='left:628.85px;top:231.00px;font:400 11.9px/1 "Liberation Mono","DejaVu Sans Mono",monospace;color:#9b9b9b;letter-spacing:0.000px;'>3</div>
<div class="t" id="t91" style='left:665px;top:231.00px;font:400 11.92px/1 "Liberation Mono","DejaVu Sans Mono",monospace;color:#24292e;letter-spacing:0.000px;'>    int divide(int dividend, int divisor) {</div>
<div class="t" id="t92" style='left:628.85px;top:246.00px;font:400 11.9px/1 "Liberation Mono","DejaVu Sans Mono",monospace;color:#9b9b9b;letter-spacing:0.000px;'>4</div>
<div class="t" id="t93" style='left:628.85px;top:261.00px;font:400 11.9px/1 "Liberation Mono","DejaVu Sans Mono",monospace;color:#9b9b9b;letter-spacing:0.000px;'>5</div>
<div class="t" id="t94" style='left:665px;top:261.00px;font:400 11.92px/1 "Liberation Mono","DejaVu Sans Mono",monospace;color:#24292e;letter-spacing:0.000px;'>    }</div>
<div class="t" id="t95" style='left:628.85px;top:276.00px;font:400 11.9px/1 "Liberation Mono","DejaVu Sans Mono",monospace;color:#9b9b9b;letter-spacing:0.000px;'>6</div>
<div class="t" id="t96" style='left:665px;top:276.00px;font:400 11.92px/1 "Liberation Mono","DejaVu Sans Mono",monospace;color:#24292e;letter-spacing:0.000px;'>};</div>
<div class="t" id="t97" style='left:628.85px;top:291.00px;font:400 11.9px/1 "Liberation Mono","DejaVu Sans Mono",monospace;color:#9b9b9b;letter-spacing:0.000px;'>7</div>
<div class="t" id="t98" style='left:665px;top:291.00px;font:400 11.92px/1 "Liberation Mono","DejaVu Sans Mono",monospace;color:#24292e;letter-spacing:0.000px;'><span style="color:#4f83c6">/*</span></div>
<div class="t" id="t99" style='left:628.85px;top:306.00px;font:400 11.9px/1 "Liberation Mono","DejaVu Sans Mono",monospace;color:#9b9b9b;letter-spacing:0.000px;'>8</div>
<div class="t" id="t100" style='left:665px;top:306.00px;font:400 11.92px/1 "Liberation Mono","DejaVu Sans Mono",monospace;color:#24292e;letter-spacing:0.000px;'><span style="color:#4f83c6">19/3 = 3</span></div>
<div class="t" id="t101" style='left:628.85px;top:321.00px;font:400 11.9px/1 "Liberation Mono","DejaVu Sans Mono",monospace;color:#9b9b9b;letter-spacing:0.000px;'>9</div>
<div class="t" id="t102" style='left:665px;top:321.00px;font:400 11.92px/1 "Liberation Mono","DejaVu Sans Mono",monospace;color:#24292e;letter-spacing:0.000px;'><span style="color:#4f83c6">while(divisor &lt; dividend) {</span></div>
<div class="t" id="t103" style='left:621.7px;top:336.00px;font:400 11.9px/1 "Liberation Mono","DejaVu Sans Mono",monospace;color:#9b9b9b;letter-spacing:0.000px;'>10</div>
<div class="t" id="t104" style='left:665px;top:336.00px;font:400 11.92px/1 "Liberation Mono","DejaVu Sans Mono",monospace;color:#24292e;letter-spacing:0.000px;'><span style="color:#4f83c6">3&lt;&lt;1 = 6   *2 1&lt;&lt;1</span></div>
<div class="t" id="t105" style='left:621.7px;top:351.00px;font:400 11.9px/1 "Liberation Mono","DejaVu Sans Mono",monospace;color:#9b9b9b;letter-spacing:0.000px;'>11</div>
<div class="t" id="t106" style='left:665px;top:351.00px;font:400 11.92px/1 "Liberation Mono","DejaVu Sans Mono",monospace;color:#24292e;letter-spacing:0.000px;'><span style="color:#4f83c6">6&lt;&lt;1 = 12  *4 2&lt;&lt;1</span></div>
<div class="t" id="t107" style='left:621.7px;top:366.00px;font:400 11.9px/1 "Liberation Mono","DejaVu Sans Mono",monospace;color:#9b9b9b;letter-spacing:0.000px;'>12</div>
<div class="t" id="t108" style='left:621.7px;top:381.00px;font:400 11.9px/1 "Liberation Mono","DejaVu Sans Mono",monospace;color:#9b9b9b;letter-spacing:0.000px;'>13</div>
<div class="t" id="t109" style='left:621.7px;top:396.00px;font:400 11.9px/1 "Liberation Mono","DejaVu Sans Mono",monospace;color:#9b9b9b;letter-spacing:0.000px;'>14</div>
<div class="t" id="t110" style='left:665px;top:396.00px;font:400 11.92px/1 "Liberation Mono","DejaVu Sans Mono",monospace;color:#24292e;letter-spacing:0.000px;'><span style="color:#4f83c6">divident = divident - tmp</span></div>
<div class="t" id="t111" style='left:621.7px;top:411.00px;font:400 11.9px/1 "Liberation Mono","DejaVu Sans Mono",monospace;color:#9b9b9b;letter-spacing:0.000px;'>15</div>
<div class="t" id="t112" style='left:621.7px;top:426.00px;font:400 11.9px/1 "Liberation Mono","DejaVu Sans Mono",monospace;color:#9b9b9b;letter-spacing:0.000px;'>16</div>
<div class="t" id="t113" style='left:665px;top:426.00px;font:400 11.92px/1 "Liberation Mono","DejaVu Sans Mono",monospace;color:#24292e;letter-spacing:0.000px;'><span style="color:#4f83c6">3&lt;&lt;1 = 6   *2 1&lt;&lt;1</span></div>
<div class="t" id="t114" style='left:621.7px;top:441.00px;font:400 11.9px/1 "Liberation Mono","DejaVu Sans Mono",monospace;color:#9b9b9b;letter-spacing:0.000px;'>17</div>
<div class="t" id="t115" style='left:621.7px;top:456.00px;font:400 11.9px/1 "Liberation Mono","DejaVu Sans Mono",monospace;color:#9b9b9b;letter-spacing:0.000px;'>18</div>
<div class="t" id="t116" style='left:621.7px;top:471.00px;font:400 11.9px/1 "Liberation Mono","DejaVu Sans Mono",monospace;color:#9b9b9b;letter-spacing:0.000px;'>19</div>
<div class="t" id="t117" style='left:621.7px;top:486.00px;font:400 11.9px/1 "Liberation Mono","DejaVu Sans Mono",monospace;color:#9b9b9b;letter-spacing:0.000px;'>20</div>
<div class="t" id="t118" style='left:665px;top:486.00px;font:400 11.92px/1 "Liberation Mono","DejaVu Sans Mono",monospace;color:#24292e;letter-spacing:0.000px;'><span style="color:#4f83c6">}</span></div>
<div class="t" id="t119" style='left:621.7px;top:501.00px;font:400 11.9px/1 "Liberation Mono","DejaVu Sans Mono",monospace;color:#9b9b9b;letter-spacing:0.000px;'>21</div>
<div class="t" id="t120" style='left:665px;top:501.00px;font:400 11.92px/1 "Liberation Mono","DejaVu Sans Mono",monospace;color:#24292e;letter-spacing:0.000px;'><span style="color:#4f83c6">*/</span></div>
<div class="t" id="t121" style='left:36px;top:688.40px;font:400 12.5px/1 "Liberation Sans","Noto Sans CJK SC",sans-serif;color:#5a6369;letter-spacing:-0.900px;clip-path:inset(0 0 11.0px 0);'>Problems</div>
<div class="t" id="t122" style='left:275px;top:688.40px;font:400 12.5px/1 "Liberation Sans","Noto Sans CJK SC",sans-serif;color:#5a6369;letter-spacing:-0.103px;clip-path:inset(0 0 11.0px 0);'>Pick One</div>
<div class="t" id="t123" style='left:413px;top:688.40px;font:400 12.5px/1 "Liberation Sans","Noto Sans CJK SC",sans-serif;color:#5a6369;letter-spacing:-0.900px;clip-path:inset(0 0 11.0px 0);'>Prev</div>
<div class="t" id="t124" style='left:472px;top:688.40px;font:400 12.5px/1 "Liberation Sans","Noto Sans CJK SC",sans-serif;color:#5a6369;letter-spacing:-0.900px;clip-path:inset(0 0 11.0px 0);'>4/10</div>
<div class="t" id="t125" style='left:538px;top:688.40px;font:400 12.5px/1 "Liberation Sans","Noto Sans CJK SC",sans-serif;color:#5a6369;letter-spacing:-0.568px;clip-path:inset(0 0 11.0px 0);'>Next</div>
<div class="t" id="t126" style='left:620px;top:688.40px;font:400 12.5px/1 "Liberation Sans","Noto Sans CJK SC",sans-serif;color:#5a6369;letter-spacing:-0.900px;clip-path:inset(0 0 11.0px 0);'>Console</div>
<div class="t" id="t127" style='left:705px;top:688.40px;font:400 12.5px/1 "Liberation Sans","Noto Sans CJK SC",sans-serif;color:#5a6369;letter-spacing:0.278px;clip-path:inset(0 0 11.0px 0);'>Contribute i</div>
<div class="t" id="t128" style='left:1150px;top:688.40px;font:400 12.5px/1 "Liberation Sans","Noto Sans CJK SC",sans-serif;color:#5a6369;letter-spacing:0.700px;clip-path:inset(0 0 11.0px 0);'>Run Code</div>
</body></html>
